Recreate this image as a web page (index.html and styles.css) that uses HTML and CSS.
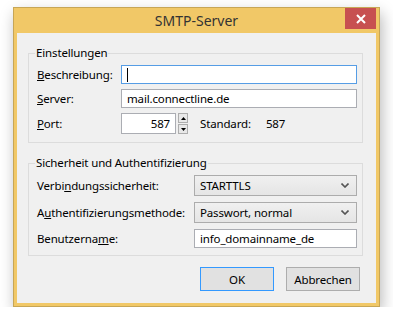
FILE: index.html
```html
<!DOCTYPE html>
<html lang="de">
<head>
    <meta charset="UTF-8">
    <title>SMTP-Server</title>
    <link rel="stylesheet" href="styles.css">
</head>
<body>
    <div class="window">
        <div class="titlebar">
            <span class="title">SMTP-Server</span>
            <div class="close">
                <svg width="10" height="10" viewBox="0 0 10 10">
                    <path d="M1 1 L9 9 M9 1 L1 9" stroke="#fff" stroke-width="2"/>
                </svg>
            </div>
        </div>

        <div class="client">
            <fieldset class="group">
                <legend>Einstellungen</legend>
                <div class="rows rows-main">
                    <label><u>B</u>eschreibung:</label>
                    <div class="field focused"><span class="caret"></span></div>

                    <label><u>S</u>erver:</label>
                    <div class="field">mail.connectline.de</div>

                    <label><u>P</u>ort:</label>
                    <div class="port-row">
                        <div class="field port">587</div>
                        <div class="spin">
                            <div class="spin-btn">
                                <svg width="5" height="3" viewBox="0 0 5 3"><path d="M0 3 L2.5 0 L5 3 Z" fill="#000"/></svg>
                            </div>
                            <div class="spin-btn">
                                <svg width="5" height="3" viewBox="0 0 5 3"><path d="M0 0 L2.5 3 L5 0 Z" fill="#000"/></svg>
                            </div>
                        </div>
                        <span class="std-label">Standard:</span>
                        <span class="std-value">587</span>
                    </div>
                </div>
            </fieldset>

            <fieldset class="group group-sec">
                <legend>Sicherheit und Authentifizierung</legend>
                <div class="rows rows-sec">
                    <label>Verbi<u>n</u>dungssicherheit:</label>
                    <div class="combo">
                        <span>STARTTLS</span>
                        <svg width="8" height="5" viewBox="0 0 8 5"><path d="M0.5 0.5 L4 4 L7.5 0.5" stroke="#555" stroke-width="1.6" fill="none"/></svg>
                    </div>

                    <label>A<u>u</u>thentifizierungsmethode:</label>
                    <div class="combo">
                        <span>Passwort, normal</span>
                        <svg width="8" height="5" viewBox="0 0 8 5"><path d="M0.5 0.5 L4 4 L7.5 0.5" stroke="#555" stroke-width="1.6" fill="none"/></svg>
                    </div>

                    <label>Benutzerna<u>m</u>e:</label>
                    <div class="field">info_domainname_de</div>
                </div>
            </fieldset>

            <div class="buttons">
                <div class="btn default">OK</div>
                <div class="btn">Abbrechen</div>
            </div>
        </div>
    </div>
</body>
</html>
```

FILE: styles.css
```css
body {
    margin: 0;
    padding: 7px 0 0 13px;
    background: #fff;
    font-family: 'Noto Sans', sans-serif;
    font-size: 11.5px;
    letter-spacing: -0.15px;
    color: #000;
}
.window {
    width: 359px;
    border: 1px solid #c7a656;
    background: #f1c867;
    padding: 0 3px 3px 3px;
    box-shadow: 2px 6px 14px rgba(0, 0, 0, 0.28);
}
.titlebar {
    height: 25px;
    display: grid;
    grid-template-columns: 1fr auto 1fr;
    align-items: start;
}
.title {
    grid-column: 2;
    font-size: 14px;
    letter-spacing: 0;
    line-height: 26px;
    color: #333;
}
.close {
    grid-column: 3;
    justify-self: end;
    width: 31px;
    height: 21px;
    background: #c75050;
    display: flex;
    align-items: center;
    justify-content: center;
}
.client {
    background: #f0f0f0;
    padding: 12px 13px 12px 11px;
}
.group {
    margin: 0;
    padding: 4px 5px 8px 8px;
    border: 1px solid #dcdcdc;
}
.group legend {
    padding: 0 1px;
    margin-left: -2px;
    line-height: 16px;
}
.group-sec {
    margin-top: 12px;
    padding-bottom: 7px;
}
.rows {
    display: grid;
    row-gap: 5px;
    align-items: center;
}
.rows-main {
    grid-template-columns: 84px 1fr;
}
.rows-sec {
    grid-template-columns: 157px 1fr;
    row-gap: 6px;
}
label {
    line-height: 16px;
}
.field {
    height: 17px;
    border: 1px solid #abadb3;
    background: #fff;
    padding: 0 5px;
    line-height: 17px;
    display: flex;
    align-items: center;
}
.field.focused {
    border-color: #569de5;
}
.caret {
    width: 1px;
    height: 14px;
    background: #000;
}
.port-row {
    display: flex;
    align-items: center;
}
.field.port {
    width: 43px;
    height: 19px;
    justify-content: flex-end;
}
.spin {
    margin-left: 2px;
    display: flex;
    flex-direction: column;
    gap: 1px;
}
.spin-btn {
    width: 8px;
    height: 8px;
    border: 1px solid #adadad;
    background: #e8e8e8;
    display: flex;
    align-items: center;
    justify-content: center;
}
.std-label {
    margin-left: 12px;
}
.std-value {
    margin-left: 15px;
}
.combo {
    height: 19px;
    border: 1px solid #acacac;
    background: linear-gradient(#f0f0f0, #e5e5e5);
    padding: 0 7px 0 5px;
    display: flex;
    align-items: center;
    justify-content: space-between;
}
.buttons {
    margin-top: 11px;
    display: flex;
    justify-content: flex-end;
    gap: 12px;
    padding-right: 3px;
}
.btn {
    width: 72px;
    height: 22px;
    border: 1px solid #adadad;
    background: #e1e1e1;
    display: flex;
    align-items: center;
    justify-content: center;
}
.btn.default {
    border-color: #3399ff;
}
```
